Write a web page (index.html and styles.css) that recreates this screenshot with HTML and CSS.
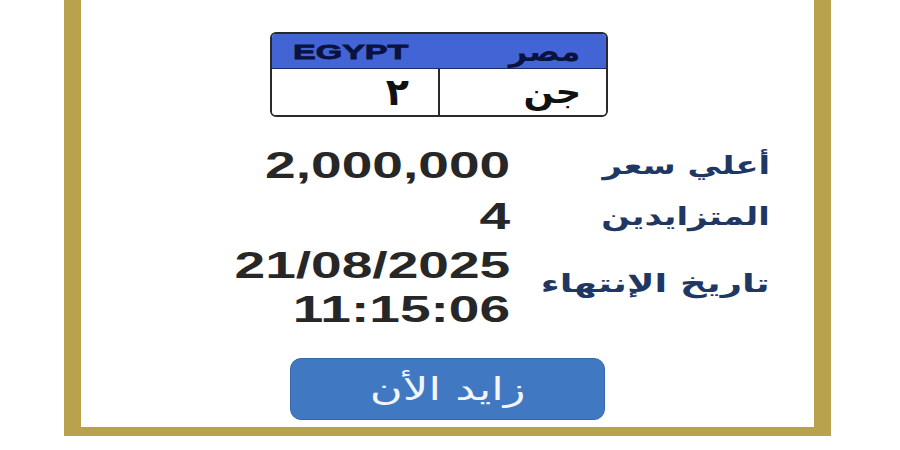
FILE: index.html
```html
<!DOCTYPE html>
<html lang="ar">
<head>
<meta charset="utf-8">
<title>لوحة مميزة</title>
<link rel="stylesheet" href="styles.css">
</head>
<body>
<div class="frame">
  <div class="plate">
    <div class="plate-head">
      <span class="egypt">EGYPT</span>
      <span class="misr">مصر</span>
    </div>
    <div class="plate-body">
      <div class="cell cell-num"><span class="plate-txt plate-num">٢</span></div>
      <div class="cell cell-let"><span class="plate-txt">جن</span></div>
    </div>
  </div>

  <div class="info">
    <div class="val"><span class="v">2,000,000</span></div>
    <div class="lab"><span class="l">أعلي سعر</span></div>

    <div class="val"><span class="v">4</span></div>
    <div class="lab"><span class="l">المتزايدين</span></div>

    <div class="val val-multi"><span class="v">21/08/2025</span><span class="v">11:15:06</span></div>
    <div class="lab lab-date"><span class="l l-wide">تاريخ الإنتهاء</span></div>
  </div>

  <div class="btn-row">
    <button class="bid"><span class="bid-txt">زايد الأن</span></button>
  </div>
</div>
</body>
</html>
```
FILE: styles.css
```css
html, body {
  margin: 0;
  padding: 0;
  background: #ffffff;
  width: 900px;
  height: 450px;
  overflow: hidden;
}

.frame {
  margin-left: 64px;
  width: 767px;
  height: 436px;
  box-sizing: border-box;
  border-style: solid;
  border-color: #b8a24d;
  border-width: 0 17px 9px 17px;
  padding-top: 32px;
  background: #ffffff;
}

.plate {
  margin-left: 189px;
  width: 338px;
  height: 85px;
  box-sizing: border-box;
  border: 2px solid #2a2a2a;
  border-radius: 6px;
  overflow: hidden;
  display: flex;
  flex-direction: column;
}

.plate-head {
  height: 35px;
  flex: none;
  box-sizing: border-box;
  background: #4264d4;
  border-bottom: 1px solid #1d2a6a;
  display: flex;
  align-items: center;
  justify-content: space-between;
  padding: 2px 26px 0 21px;
}

.egypt {
  display: block;
  line-height: 30px;
  font-family: "Liberation Sans", Arial, sans-serif;
  font-weight: bold;
  font-size: 21px;
  color: #0a1240;
  -webkit-text-stroke: 0.8px #0a1240;
  transform: scaleX(1.62);
  transform-origin: left center;
}

.misr {
  display: block;
  line-height: 30px;
  font-family: "DejaVu Sans", sans-serif;
  font-weight: bold;
  font-size: 28px;
  color: #0a1240;
  transform: scaleX(1.15);
  transform-origin: right center;
}

.plate-body {
  flex: 1;
  display: flex;
  background: #ffffff;
}

.cell {
  display: flex;
  align-items: center;
  justify-content: flex-end;
  box-sizing: border-box;
}

.cell-num {
  width: 168px;
  padding-right: 29px;
  border-right: 2px solid #2a2a2a;
}

.cell-let {
  flex: 1;
  padding-right: 25px;
}

.plate-txt {
  display: block;
  line-height: 40px;
  font-family: "DejaVu Sans", sans-serif;
  font-weight: bold;
  font-size: 31px;
  color: #111111;
  transform: scaleX(1.15);
  transform-origin: right center;
}

.plate-num {
  font-size: 38px;
  transform: scaleX(1);
}

.info {
  margin-top: 23px;
  display: grid;
  grid-template-columns: 1fr 260px;
  grid-template-rows: 52px 50px 92px;
  padding-right: 44px;
}

.val {
  display: flex;
  flex-direction: column;
  align-items: flex-end;
  justify-content: center;
}

.v {
  display: block;
  line-height: 44px;
  font-family: "Liberation Sans", Arial, sans-serif;
  font-weight: bold;
  font-size: 36px;
  color: #272727;
  transform: scaleX(1.53);
  transform-origin: right center;
}

.lab {
  display: flex;
  align-items: center;
  justify-content: flex-end;
}

.lab-date {
  padding-bottom: 8px;
}

.l {
  display: block;
  line-height: 34px;
  direction: rtl;
  font-family: "DejaVu Sans", sans-serif;
  font-weight: bold;
  font-size: 25px;
  color: #1f3763;
  transform: scaleX(1.35);
  transform-origin: right center;
}

.l-wide {
  transform: scaleX(1.48);
}

.btn-row {
  margin-top: 24px;
  display: flex;
  padding-left: 209px;
}

.bid {
  width: 315px;
  height: 62px;
  border: 1px solid #3668ac;
  border-radius: 11px;
  background: #4079c2;
  display: flex;
  align-items: center;
  justify-content: center;
  padding: 0;
}

.bid-txt {
  display: block;
  line-height: 40px;
  direction: rtl;
  font-family: "DejaVu Sans", sans-serif;
  font-size: 31px;
  color: #f2f5ff;
  transform: scaleX(1.45);
}
```
